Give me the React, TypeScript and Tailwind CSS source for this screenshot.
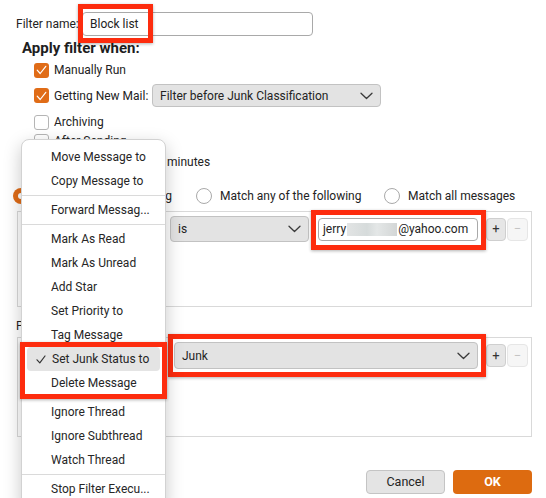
import React from 'react';

function Chevron() {
  return (
    <svg width="13" height="8" viewBox="0 0 13 8" fill="none">
      <path d="M1 1.2l5.5 5.3 5.5-5.3" stroke="#3a3a3a" strokeWidth="1.3" strokeLinecap="round" strokeLinejoin="round" />
    </svg>
  );
}

function Check({ on }: { on?: boolean }) {
  if (!on) {
    return <span className="block h-[15px] w-[15px] shrink-0 rounded-[3px] border border-[#b5b5b5] bg-white" />;
  }
  return (
    <span className="flex h-[15px] w-[15px] shrink-0 items-center justify-center rounded-[3px] bg-[#e06c17]">
      <svg width="11" height="10" viewBox="0 0 11 10" fill="none">
        <path d="M1.2 5.2l3 3.3L9.8 1.3" stroke="#fff" strokeWidth="1.2" strokeLinecap="round" strokeLinejoin="round" />
      </svg>
    </span>
  );
}

function Radio({ on }: { on?: boolean }) {
  if (on) {
    return (
      <span className="flex h-[16px] w-[16px] shrink-0 items-center justify-center rounded-full bg-[#e06c17]">
        <span className="block h-[6px] w-[6px] rounded-full bg-white" />
      </span>
    );
  }
  return <span className="block h-[16px] w-[16px] shrink-0 rounded-full border border-[#a9a9a9] bg-white" />;
}

function Select({ label, className }: { label: string; className: string }) {
  return (
    <div className={`flex shrink-0 items-center justify-between whitespace-nowrap rounded-[4px] border border-[#c2c2c2] bg-[#e3e3e3] pl-[7px] pr-[7px] ${className}`}>
      <span>{label}</span>
      <Chevron />
    </div>
  );
}

function PlusMinus() {
  return (
    <div className="ml-[8px] flex gap-[1px]">
      <div className="flex h-[23px] w-[20px] items-center justify-center rounded-[4px] border border-[#cfcfcf] bg-[#e6e6e6] text-[13px] text-[#333]">+</div>
      <div className="flex h-[23px] w-[21px] items-center justify-center rounded-[4px] border border-[#e6e6e6] bg-[#f6f6f6] text-[13px] text-[#c4c4c4]">−</div>
    </div>
  );
}

function MenuItem({ label }: { label: string }) {
  return <div className="flex h-[24px] items-center whitespace-nowrap pl-[29px]">{label}</div>;
}

function Sep() {
  return (
    <div className="flex h-[5px] items-center">
      <div className="h-px w-full bg-[#dadada]" />
    </div>
  );
}

export default function App() {
  return (
    <div className="relative h-[498px] w-[546px] overflow-hidden whitespace-nowrap bg-white font-['Roboto',sans-serif] text-[12px] text-[#232323]">
      {/* filter name */}
      <div className="mt-[12px] flex h-[24px] items-center">
        <span className="ml-4 w-[66px] shrink-0">Filter name:</span>
        <div className="relative flex h-[24px] w-[231px] items-center rounded-[4px] border border-[#a9a9a9] bg-white pl-[7px]">
          Block list
          <span className="absolute left-[-5px] top-[-9px] h-[39px] w-[75px] border-[5px] border-[#fd2c0e] shadow-[0_1px_3px_rgba(0,0,0,0.3)]" />
        </div>
      </div>

      <div className="ml-[22px] mt-[3px] h-[18px] text-[15px] font-bold leading-[18px] text-[#1e1e1e]">Apply filter when:</div>

      <div className="mt-[3px] flex h-[20px] items-center gap-[5px] pl-[34px]">
        <Check on />
        <span>Manually Run</span>
      </div>
      <div className="mt-[4px] flex h-[23px] items-center gap-[5px] pl-[34px]">
        <Check on />
        <span className="w-[93px] shrink-0">Getting New Mail:</span>
        <Select label="Filter before Junk Classification" className="h-[23px] w-[229px]" />
      </div>
      <div className="mt-[5px] flex h-[20px] items-center gap-[5px] pl-[34px]">
        <Check />
        <span>Archiving</span>
      </div>
      <div className="flex h-[18px] items-center gap-[5px] pl-[34px]">
        <Check />
        <span>After Sending</span>
      </div>
      <div className="mt-[1px] flex h-[22px] items-center gap-[5px] pl-[34px]">
        <Check />
        <div className="flex w-[108px] shrink-0 items-center gap-[4px] overflow-hidden">
          <span>Periodically, every</span>
        </div>
        <span>minutes</span>
      </div>

      {/* match radios */}
      <div className="mt-[13px] flex h-[20px] items-center pl-[13px]">
        <div className="flex w-[183px] items-center gap-[8px]">
          <Radio on />
          <span>Match all of the following</span>
        </div>
        <div className="flex w-[188px] items-center gap-[8px]">
          <Radio />
          <span>Match any of the following</span>
        </div>
        <div className="flex items-center gap-[8px]">
          <Radio />
          <span>Match all messages</span>
        </div>
      </div>

      {/* conditions */}
      <div className="ml-[17px] mt-[5px] h-[96px] w-[515px] border border-[#d9d9d9] pl-[6px] pt-[4px]">
        <div className="flex h-[26px] items-center">
          <Select label="From" className="h-[26px] w-[139px]" />
          <Select label="is" className="ml-[7px] h-[26px] w-[139px]" />
          <div className="relative ml-[9px] flex h-[23px] w-[160px] items-center rounded-[4px] border border-[#a9a9a9] bg-white pl-[4px]">
            <span>jerry</span>
            <span className="mx-[1px] h-[13px] w-[50px] bg-[linear-gradient(90deg,#e2e4e4,#d6dbdb_40%,#e4e7e7_60%,#d3d6d6)]" />
            <span>@yahoo.com</span>
            <span className="absolute bottom-[-10px] left-[-8px] right-[-9px] top-[-9px] border-[5px] border-[#fd2c0e] shadow-[0_1px_3px_rgba(0,0,0,0.3)]" />
          </div>
          <PlusMinus />
        </div>
      </div>

      <div className="ml-4 mt-[11px] h-[16px] leading-[16px]">Perform these actions:</div>

      {/* actions */}
      <div className="ml-[17px] mt-[3px] h-[100px] w-[515px] border border-[#d9d9d9] pl-[6px] pt-[4px]">
        <div className="flex h-[27px] items-center">
          <Select label="Set Junk Status to" className="h-[27px] w-[139px]" />
          <div className="relative ml-[11px]">
            <Select label="Junk" className="h-[27px] w-[304px]" />
            <span className="absolute bottom-[-8px] left-[-6px] right-[-8px] top-[-8px] border-[5px] border-[#fd2c0e] shadow-[0_1px_3px_rgba(0,0,0,0.3)]" />
          </div>
          <PlusMinus />
        </div>
      </div>

      {/* dialog buttons */}
      <div className="mt-[33px] flex justify-end gap-[8px] pr-[14px]">
        <div className="flex h-[24px] w-[79px] items-center justify-center rounded-[4px] border border-[#c4c4c4] bg-[#e4e4e4] text-[12.5px]">Cancel</div>
        <div className="flex h-[24px] w-[79px] items-center justify-center rounded-[4px] bg-[#dd6b10] text-[12.5px] font-bold text-white">OK</div>
      </div>

      {/* action type menu */}
      <div className="absolute left-[21px] top-[139px] w-[145px] rounded-[8px] border border-[#d2d2d2] bg-white pt-[5px] pb-[10px] text-[#262626] shadow-[0_6px_18px_rgba(0,0,0,0.22)]">
        <MenuItem label="Move Message to" />
        <MenuItem label="Copy Message to" />
        <Sep />
        <MenuItem label="Forward Messag..." />
        <Sep />
        <MenuItem label="Mark As Read" />
        <MenuItem label="Mark As Unread" />
        <MenuItem label="Add Star" />
        <MenuItem label="Set Priority to" />
        <MenuItem label="Tag Message" />
        <div className="relative">
          <div className="mx-[5px] flex h-[24px] items-center rounded-[4px] bg-[#e4e4e4] pl-[9px]">
            <svg width="10" height="9" viewBox="0 0 10 9" fill="none" className="mr-[6px]">
              <path d="M1 4.8l2.8 3L9 1" stroke="#333" strokeWidth="1.2" strokeLinecap="round" strokeLinejoin="round" />
            </svg>
            Set Junk Status to
          </div>
          <MenuItem label="Delete Message" />
          <span className="absolute bottom-[-4px] left-[-2px] right-[-2px] top-[-5px] border-[5px] border-[#fd2c0e] shadow-[0_1px_3px_rgba(0,0,0,0.3)]" />
        </div>
        <Sep />
        <MenuItem label="Ignore Thread" />
        <MenuItem label="Ignore Subthread" />
        <MenuItem label="Watch Thread" />
        <Sep />
        <MenuItem label="Stop Filter Execu..." />
      </div>
    </div>
  );
}
